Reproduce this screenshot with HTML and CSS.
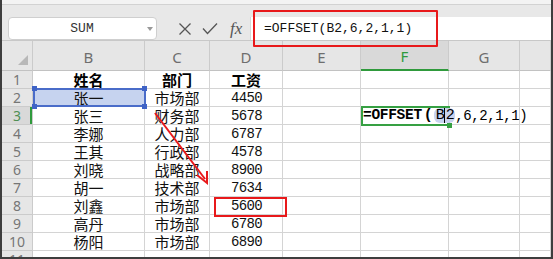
FILE: index.html
```html
<!DOCTYPE html>
<html>
<head>
<meta charset="utf-8">
<link rel="stylesheet" href="styles.css">
</head>
<body>
<div class="app">
  <div class="topstrip"></div>
  <div class="fbar">
    <div class="namebox"><span class="nb-text">SUM</span><span class="caret"></span></div>
    <div class="fbtns">
      <svg class="ico" width="14" height="14" viewBox="0 0 14 14"><path d="M1.5 1.5 L12.5 12.5 M12.5 1.5 L1.5 12.5" stroke="#555" stroke-width="1.3" fill="none"/></svg>
      <svg class="ico" width="16" height="14" viewBox="0 0 16 14"><path d="M1 6.5 L5.5 11.5 L15 1.5" stroke="#555" stroke-width="1.3" fill="none"/></svg>
      <span class="fx">fx</span>
    </div>
    <div class="formula">=OFFSET(B2,6,2,1,1)</div>
  </div>
  <div class="sheet">
    <div class="hd corner"><span class="tri"></span></div>
    <div class="hd">B</div><div class="hd">C</div><div class="hd">D</div><div class="hd">E</div><div class="hd hd-sel">F</div><div class="hd">G</div><div class="hd"></div>

    <div class="rh">1</div><div class="c b">姓名</div><div class="c b">部门</div><div class="c b">工资</div><div class="c"></div><div class="c"></div><div class="c"></div><div class="c"></div>
    <div class="rh">2</div><div class="c sel">张一<i class="h h1"></i><i class="h h2"></i><i class="h h3"></i><i class="h h4"></i></div><div class="c">市场部</div><div class="c n">4450</div><div class="c"></div><div class="c"></div><div class="c"></div><div class="c"></div>
    <div class="rh rh-sel">3</div><div class="c">张三</div><div class="c">财务部</div><div class="c n">5678</div><div class="c"></div><div class="c edit"><span class="ftext"><b class="fb">=OFFSET</b><b class="fp">(</b><span class="ref">B<i class="cur"></i>2</span><span class="fr">,6,2,1,1)</span></span><i class="fill"></i></div><div class="c"></div><div class="c"></div>
    <div class="rh">4</div><div class="c">李娜</div><div class="c">人力部</div><div class="c n">6787</div><div class="c"></div><div class="c"></div><div class="c"></div><div class="c"></div>
    <div class="rh">5</div><div class="c">王其</div><div class="c">行政部</div><div class="c n">4578</div><div class="c"></div><div class="c"></div><div class="c"></div><div class="c"></div>
    <div class="rh">6</div><div class="c">刘晓</div><div class="c">战略部</div><div class="c n">8900</div><div class="c"></div><div class="c"></div><div class="c"></div><div class="c"></div>
    <div class="rh">7</div><div class="c">胡一</div><div class="c">技术部</div><div class="c n">7634</div><div class="c"></div><div class="c"></div><div class="c"></div><div class="c"></div>
    <div class="rh">8</div><div class="c">刘鑫</div><div class="c">市场部</div><div class="c n">5600</div><div class="c"></div><div class="c"></div><div class="c"></div><div class="c"></div>
    <div class="rh">9</div><div class="c">高丹</div><div class="c">市场部</div><div class="c n">6780</div><div class="c"></div><div class="c"></div><div class="c"></div><div class="c"></div>
    <div class="rh">10</div><div class="c">杨阳</div><div class="c">市场部</div><div class="c n">6890</div><div class="c"></div><div class="c"></div><div class="c"></div><div class="c"></div>
    <div class="rh">11</div><div class="c"></div><div class="c"></div><div class="c"></div><div class="c"></div><div class="c"></div><div class="c"></div><div class="c"></div>
  </div>
  <div class="mark mark-formula"></div>
  <div class="mark mark-d8"></div>
  <svg class="arrow" width="553" height="259" viewBox="0 0 553 259">
    <path d="M155 113 L205 179" stroke="#e8191b" stroke-width="2" fill="none"/>
    <path d="M197 175 L207 183 L207 171" stroke="#e8191b" stroke-width="2" fill="none" stroke-linejoin="miter"/>
  </svg>
</div>
</body>
</html>
```
FILE: styles.css
```css
* { box-sizing: border-box; }
html, body { margin: 0; padding: 0; }
body { background: #fff; font-family: "Noto Sans CJK SC", sans-serif; }
.app {
  position: relative;
  width: 553px;
  height: 259px;
  overflow: hidden;
  border-left: 2px solid #3e3e3e;
  border-right: 2px solid #3e3e3e;
  border-bottom: 2px solid #3e3e3e;
  background: #fff;
}
.topstrip { height: 5px; background: #f3f3f3; border-bottom: 1px solid #d2d2d2; }
.fbar {
  height: 36px;
  background: #e8e8e8;
  border-bottom: 1px solid #c8c8c8;
  display: flex;
  align-items: flex-start;
  padding-top: 12px;
}
.namebox {
  margin-left: 6px;
  width: 149px;
  height: 23px;
  background: #fff;
  border: 1px solid #cfcfcf;
  border-radius: 4px;
  display: flex;
  align-items: center;
  position: relative;
}
.nb-text {
  flex: 1;
  text-align: center;
  font-family: "Liberation Mono", monospace;
  font-size: 13px;
  color: #333;
  padding-left: 8px;
}
.caret {
  width: 0; height: 0;
  border-left: 3px solid transparent;
  border-right: 3px solid transparent;
  border-top: 4px solid #999;
  margin-right: 3px;
}
.fbtns {
  width: 93px;
  height: 23px;
  display: flex;
  align-items: center;
  padding-left: 21px;
  gap: 10px;
}
.fx {
  font-family: "Liberation Serif", serif;
  font-style: italic;
  font-size: 17px;
  color: #555;
  margin-left: 2px;
}
.formula {
  flex: 1;
  height: 23px;
  background: #fff;
  border-left: 1px solid #d8d8d8;
  font-family: "Liberation Mono", monospace;
  font-size: 13px;
  color: #111;
  line-height: 23px;
  padding-left: 13px;
}
.sheet {
  display: grid;
  grid-template-columns: 31px 112px 65px 73px 78px 88px 71px 1fr;
  grid-template-rows: 30px repeat(11, 18px);
}
.hd {
  background: #e6e6e6;
  border-right: 1px solid #cbcbcb;
  border-bottom: 1px solid #c2c2c2;
  display: flex;
  align-items: center;
  justify-content: center;
  font-family: "Noto Sans", sans-serif;
  font-size: 15px;
  color: #6e6e6e;
  padding-top: 2px;
}
.hd-sel { background: #d9d9d9; color: #2f9a3c; border-bottom: 2px solid #2f9a3c; }
.corner { position: relative; }
.tri {
  position: absolute;
  right: 4px; bottom: 5px;
  width: 0; height: 0;
  border-left: 10px solid transparent;
  border-bottom: 10px solid #b8b8b8;
}
.rh {
  background: #e6e6e6;
  border-right: 1px solid #cbcbcb;
  border-bottom: 1px solid #cbcbcb;
  display: flex;
  align-items: center;
  justify-content: center;
  font-family: "Noto Sans", sans-serif;
  font-size: 14px;
  color: #767676;
  line-height: 1;
}
.rh-sel { background: #d9d9d9; color: #4f8f55; box-shadow: inset -2px 0 0 #2f9a3c; }
.c {
  border-right: 1px solid #d4d4d4;
  border-bottom: 1px solid #d4d4d4;
  display: flex;
  align-items: center;
  justify-content: center;
  font-size: 15px;
  line-height: 1;
  color: #111;
  white-space: nowrap;
  position: relative;
}
.c.b { font-weight: 700; color: #000; }
.c.n { font-family: "Liberation Mono", monospace; font-size: 14px; letter-spacing: -0.7px; padding-left: 1px; }
.sel { background: #c6d3ef; }
.sel::after {
  content: "";
  position: absolute;
  left: 0; top: -1px; right: -2px; bottom: -1px;
  border: 2px solid #4a6cc9;
}
.h { position: absolute; width: 5px; height: 5px; background: #3f63c6; z-index: 2; }
.h1 { left: -1px; top: -3px; }
.h2 { right: -3px; top: -3px; }
.h3 { left: -1px; bottom: -3px; }
.h4 { right: -3px; bottom: -3px; }
.edit { justify-content: flex-start; overflow: visible; z-index: 3; }
.edit::after {
  content: "";
  position: absolute;
  left: 0; top: -1px; right: -2px; bottom: -2px;
  border: 2px solid #36a043;
}
.ftext {
  position: relative;
  z-index: 4;
  padding-left: 2px;
  font-family: "Liberation Mono", monospace;
  font-size: 14px;
  color: #000;
  display: flex;
  align-items: center;
}
.fb { font-weight: 700; letter-spacing: -0.3px; font-size: 14.5px; }
.fp { font-weight: 700; padding: 0 1px 0 2px; font-size: 15px; }
.ref {
  background: #c8d3ef;
  border-radius: 6px;
  padding: 0 1px 0 2px;
  font-size: 15px;
  letter-spacing: -0.6px;
  display: inline-flex;
  align-items: center;
}
.cur { display: inline-block; width: 0; height: 15px; border-left: 1px solid #000; margin: 0 0.5px 0 0; }
.fr { letter-spacing: -0.4px; }
.fill { position: absolute; right: -4px; bottom: -4px; width: 5px; height: 5px; background: #36a043; z-index: 5; }
.mark { position: absolute; border: 2px solid #e8191b; pointer-events: none; z-index: 10; }
.mark-formula { left: 251px; top: 10px; width: 185px; height: 37px; border-radius: 1px; }
.mark-d8 { left: 212px; top: 197px; width: 73px; height: 20px; }
.arrow { position: absolute; left: -2px; top: 0; z-index: 11; pointer-events: none; }
```
